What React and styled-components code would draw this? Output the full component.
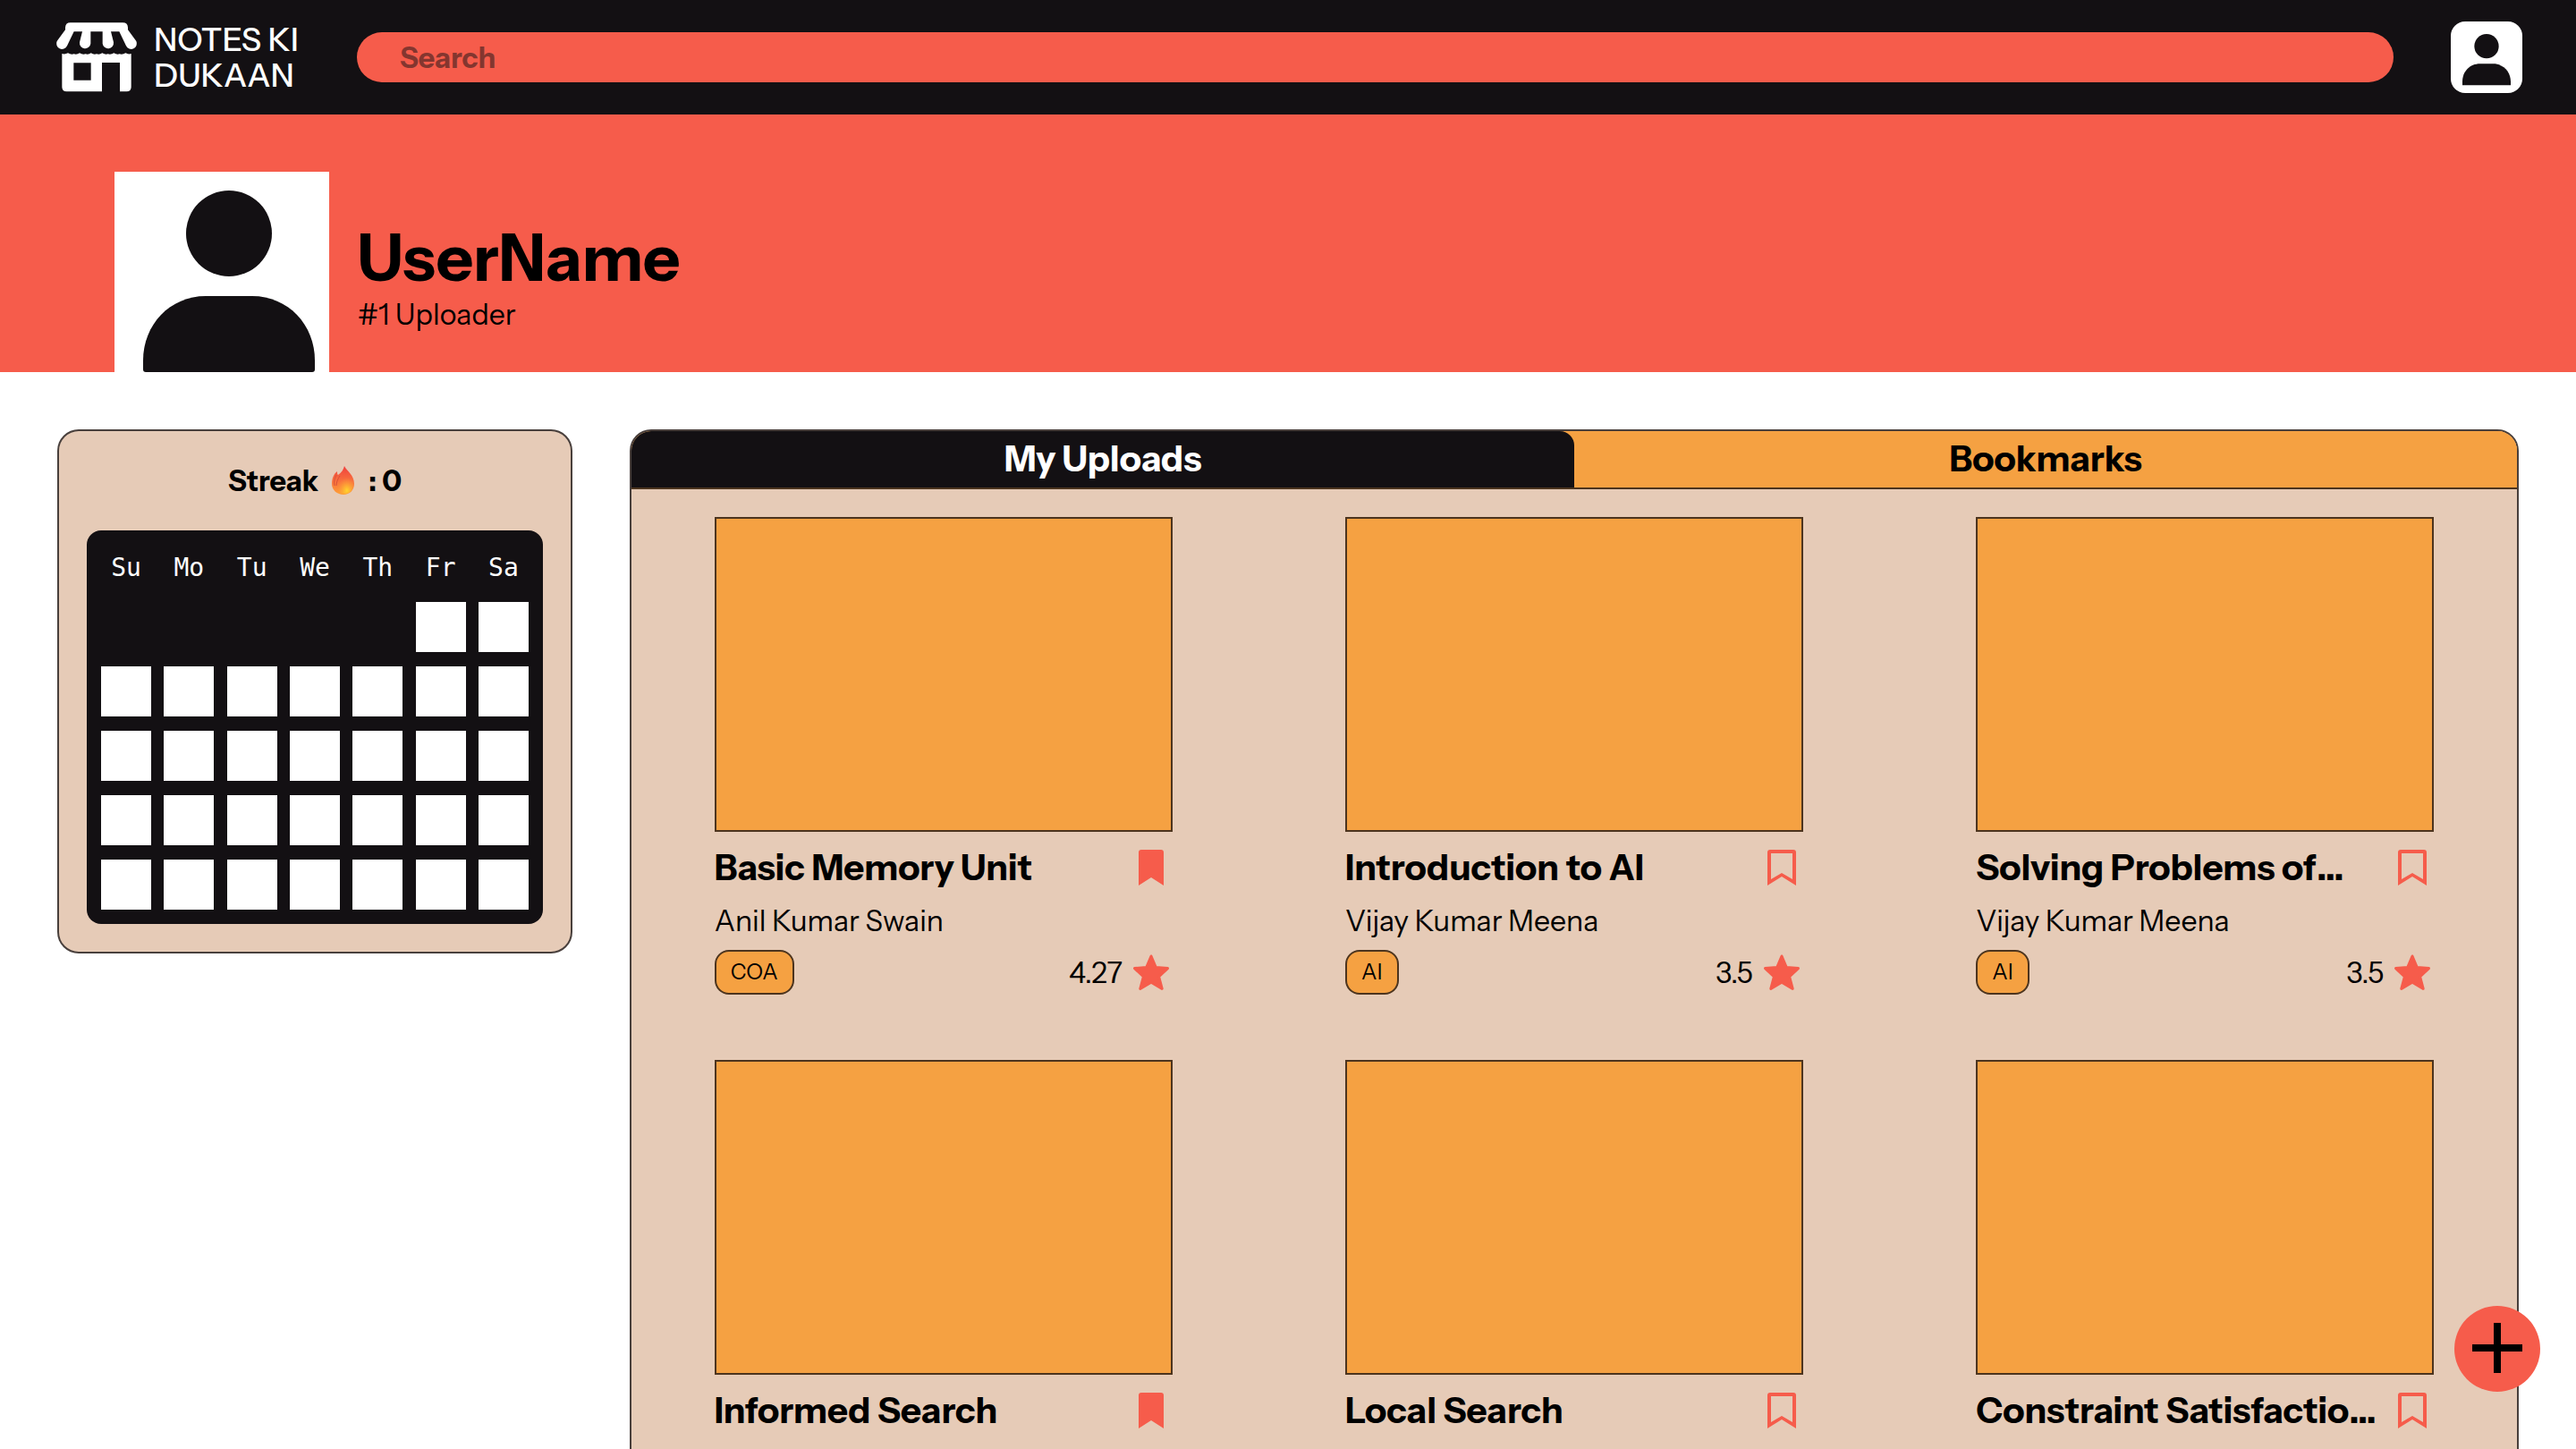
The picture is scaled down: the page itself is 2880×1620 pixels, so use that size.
import React, { useState } from "react";
import styled, { createGlobalStyle } from "styled-components";

const ink = "#131013";
const coral = "#f65c4b";
const amber = "#f5a142";
const sand = "#e6cbb7";
const line = "rgba(19, 16, 19, 0.75)";

const GlobalStyle = createGlobalStyle`
  *, *::before, *::after { box-sizing: border-box; }
  body {
    margin: 0;
    background: #fff;
    color: #000;
    font-family: "Instrument Sans", "Liberation Sans", Arial, sans-serif;
  }
  button, input { font: inherit; color: inherit; }
  button { border: 0; padding: 0; background: none; cursor: pointer; }
  h1, h2, h3, p { margin: 0; font-size: inherit; font-weight: inherit; }
`;

const Page = styled.div`
  height: 100vh;
  overflow-y: auto;
  scrollbar-width: none;
`;

const Header = styled.header`
  display: flex;
  align-items: center;
  gap: 64px;
  height: 128px;
  padding: 0 60px;
  background: ${ink};
`;

const Logo = styled.a`
  display: flex;
  align-items: center;
  gap: 16px;
  flex: 0 0 275px;
  color: #fff;
  font-size: 36px;
  font-weight: 500;
  line-height: 40px;
  white-space: nowrap;
  text-decoration: none;
`;

const LogoLine = styled.span`
  display: block;
`;

const SearchForm = styled.form`
  flex: 1;
  display: flex;
`;

const SearchInput = styled.input`
  width: 100%;
  height: 56px;
  padding: 0 48px;
  border: 0;
  border-radius: 28px;
  outline: 0;
  background: ${coral};
  font-size: 32px;
  font-weight: 700;
  &::placeholder {
    color: rgba(19, 16, 19, 0.5);
    opacity: 1;
  }
`;

const ProfileButton = styled.button`
  flex: none;
  width: 80px;
  height: 80px;
  border-radius: 16px;
  background: #fff;
  overflow: hidden;
`;

const Banner = styled.section`
  display: flex;
  align-items: flex-end;
  gap: 32px;
  height: 288px;
  padding: 0 128px;
  background: ${coral};
`;

const Avatar = styled.div`
  width: 240px;
  height: 224px;
  background: #fff;
`;

const Identity = styled.div`
  padding-bottom: 44px;
`;

const UserName = styled.h1`
  && {
    font-size: 72px;
    line-height: 88px;
    font-weight: 700;
  }
`;

const Rank = styled.p`
  && {
    font-size: 32px;
    line-height: 40px;
  }
`;

const Main = styled.main`
  display: flex;
  align-items: flex-start;
  gap: 64px;
  padding: 64px;
`;

const StreakCard = styled.section`
  flex: 0 0 576px;
  padding: 31px;
  border: 2px solid ${line};
  border-radius: 24px;
  background: ${sand};
`;

const StreakTitle = styled.h2`
  && {
    display: flex;
    justify-content: center;
    align-items: center;
    gap: 15px;
    height: 48px;
    margin-bottom: 32px;
    font-size: 32px;
    font-weight: 700;
  }
`;

const Calendar = styled.div`
  display: flex;
  flex-direction: column;
  gap: 16px;
  padding: 16px;
  border-radius: 16px;
  background: ${ink};
`;

const Week = styled.div`
  display: flex;
  justify-content: space-between;
`;

const DayName = styled.span`
  width: 56px;
  height: 48px;
  color: #fff;
  font-family: Consolas, "DejaVu Sans Mono", monospace;
  font-size: 28px;
  line-height: 52px;
  text-align: center;
`;

const Day = styled.span`
  width: 56px;
  height: 56px;
  background: ${(p) => (p.$blank ? "transparent" : "#fff")};
`;

const Panel = styled.section`
  flex: 1;
  min-width: 0;
  border: 2px solid ${line};
  border-radius: 24px;
  background: ${sand};
  overflow: hidden;
`;

const TabList = styled.div`
  display: flex;
  height: 65px;
  border-bottom: 2px solid ${line};
  background: ${amber};
`;

const Tab = styled.button`
  flex: 1;
  border-radius: 0 16px 0 0;
  background: ${(p) => (p.$active ? ink : amber)};
  color: ${(p) => (p.$active ? "#fff" : "#000")};
  font-size: 40px;
  line-height: 48px;
  padding-bottom: 2px;
  font-weight: 700;
`;

const NotesGrid = styled.div`
  display: grid;
  grid-template-columns: repeat(3, 1fr);
  justify-items: center;
  gap: 73px 8px;
  padding: 31px 0;
`;

const Card = styled.article`
  width: 512px;
`;

const Thumb = styled.div`
  height: 352px;
  margin-bottom: 16px;
  border: 2px solid ${line};
  background: ${amber};
`;

const CardRow = styled.div`
  display: flex;
  justify-content: space-between;
  align-items: center;
`;

const CardTitle = styled.h3`
  && {
    font-size: 40px;
    line-height: 48px;
    font-weight: 700;
    white-space: nowrap;
  }
`;

const Author = styled.p`
  && {
    margin: 16px 0 12px;
    font-size: 32px;
    line-height: 40px;
  }
`;

const Tag = styled.span`
  height: 50px;
  padding: 0 16px;
  border: 2px solid ${line};
  border-radius: 16px;
  background: ${amber};
  font-size: 24px;
  line-height: 46px;
`;

const Rating = styled.span`
  display: flex;
  align-items: center;
  gap: 8px;
  font-size: 32px;
`;

const IconButton = styled.button`
  display: flex;
  width: 48px;
  height: 48px;
`;

const AddButton = styled.button`
  position: fixed;
  right: 40px;
  bottom: 64px;
  width: 96px;
  height: 96px;
  border-radius: 50%;
  background: ${coral};
`;

const Icon = styled.svg`
  display: block;
  flex: none;
  width: ${(p) => p.$w}px;
  height: ${(p) => p.$h || p.$w}px;
`;

const ShopIcon = () => (
  <Icon $w={96} viewBox="30 18 288 288" fill="#fff" aria-hidden="true">
    <path d="M86 46H262Q278 46 279 62V70L307 108A18 18 0 1 1 273 124L250 76H222L231 112A18 18 0 0 1 194 116V76H154V116A18 18 0 0 1 117 112L126 76H98L75 124A18 18 0 1 1 41 108L69 70V62Q70 46 86 46Z" />
    <path
      fillRule="evenodd"
      d="M58 150Q68 153 78 148Q88 154 98 151Q108 154 117 148Q127 154 137 151Q147 154 155 148Q165 154 174 151Q184 154 193 148Q203 154 212 151Q222 154 232 148Q242 154 251 151Q261 154 271 148Q281 153 290 150V262Q290 277 275 277H252V180H192V277H73Q58 277 58 262ZM97 181V239H155V181Z"
    />
  </Icon>
);

const PersonIcon = () => (
  <Icon $w={80} viewBox="0 0 240 240" fill={ink} aria-hidden="true">
    <circle cx="120" cy="83" r="41" />
    <path d="M39 214V202C39 168 64 142 98 142H142C176 142 201 168 201 202V214Z" />
  </Icon>
);

const AvatarArt = () => (
  <Icon $w={240} $h={224} viewBox="0 0 240 224" fill={ink} aria-hidden="true">
    <circle cx="128" cy="69" r="48" />
    <path d="M32 221V211C32 171 62 139 102 139H154C194 139 224 171 224 211V221Q224 224 221 224H35Q32 224 32 221Z" />
  </Icon>
);

const FlameIcon = () => (
  <Icon $w={26} $h={32} viewBox="0 0 26 32" role="img" aria-label="fire">
    <defs>
      <linearGradient id="flame" x1="0" y1="0" x2="0" y2="1">
        <stop offset="0" stopColor="#f0403f" />
        <stop offset="0.6" stopColor="#f9783c" />
        <stop offset="1" stopColor="#ffa036" />
      </linearGradient>
      <radialGradient id="glow" cx="0.6" cy="0.85" r="0.6">
        <stop offset="0" stopColor="#ffd52e" />
        <stop offset="1" stopColor="#ffa037" stopOpacity="0" />
      </radialGradient>
    </defs>
    <path
      d="M14 0C17 6 25 10 25 20C25 27 20 32 13 32C6 32 0 27 0 20C0 14 2 9 6 6C6 8 6 9 7 10C11 7 13 4 14 0Z"
      fill="url(#flame)"
    />
    <path
      d="M16 7C17 12 24 14 24 21C24 27 20 31 14 31C9 31 6 28 6 23C6 17 14 14 16 7Z"
      fill="url(#glow)"
    />
    <path d="M5 10C3 14 2 18 3 22M9 11C7 14 5 18 5 22" fill="none" stroke="#d8503a" strokeWidth="1" />
  </Icon>
);

const BookmarkIcon = ({ filled }) => (
  <Icon $w={48} viewBox="0 0 48 48" aria-hidden="true">
    {filled ? (
      <path fill={coral} d="M13 4H35Q38 4 38 7V44L24 35L10 44V7Q10 4 13 4Z" />
    ) : (
      <path
        fill={coral}
        fillRule="evenodd"
        d="M11 4H37Q40 4 40 7V44L24 34L8 44V7Q8 4 11 4ZM12 8V37L24 30L36 37V8Z"
      />
    )}
  </Icon>
);

const StarIcon = () => (
  <Icon $w={48} viewBox="0 0 48 48" aria-hidden="true">
    <path
      fill={coral}
      stroke={coral}
      strokeWidth="3"
      strokeLinejoin="round"
      d="M24 6L29.3 18.6L42.5 19.6L32.6 28.8L36.2 42.4L24 35.2L11.8 42.4L15.4 28.8L5.5 19.6L18.7 18.6Z"
    />
  </Icon>
);

const PlusIcon = () => (
  <Icon $w={96} viewBox="0 0 96 96" aria-hidden="true">
    <path d="M44 19H52V43H76V51H52V75H44V51H20V43H44Z" />
  </Icon>
);

const dayNames = ["Su", "Mo", "Tu", "We", "Th", "Fr", "Sa"];
const leadingBlanks = 5;

const notes = [
  { title: "Basic Memory Unit", author: "Anil Kumar Swain", tag: "COA", rating: "4.27", saved: true },
  { title: "Introduction to AI", author: "Vijay Kumar Meena", tag: "AI", rating: "3.5", saved: false },
  { title: "Solving Problems of…", author: "Vijay Kumar Meena", tag: "AI", rating: "3.5", saved: false },
  { title: "Informed Search", author: "Vijay Kumar Meena", tag: "AI", rating: "3.5", saved: true },
  { title: "Local Search", author: "Vijay Kumar Meena", tag: "AI", rating: "3.5", saved: false },
  { title: "Constraint Satisfactio…", author: "Vijay Kumar Meena", tag: "AI", rating: "3.5", saved: false },
];

function NoteCard({ note }) {
  const [saved, setSaved] = useState(note.saved);
  return (
    <Card>
      <Thumb />
      <CardRow>
        <CardTitle>{note.title}</CardTitle>
        <IconButton
          type="button"
          aria-label="Bookmark"
          aria-pressed={saved}
          onClick={() => setSaved(!saved)}
        >
          <BookmarkIcon filled={saved} />
        </IconButton>
      </CardRow>
      <Author>{note.author}</Author>
      <CardRow>
        <Tag>{note.tag}</Tag>
        <Rating>
          {note.rating}
          <StarIcon />
        </Rating>
      </CardRow>
    </Card>
  );
}

export default function App() {
  const [tab, setTab] = useState("My Uploads");
  return (
    <Page>
      <GlobalStyle />
      <Header>
        <Logo href="#">
          <ShopIcon />
          <span>
            <LogoLine>NOTES KI</LogoLine>
            <LogoLine>DUKAAN</LogoLine>
          </span>
        </Logo>
        <SearchForm role="search">
          <SearchInput type="text" placeholder="Search" aria-label="Search" />
        </SearchForm>
        <ProfileButton type="button" aria-label="Profile">
          <PersonIcon />
        </ProfileButton>
      </Header>
      <Banner>
        <Avatar>
          <AvatarArt />
        </Avatar>
        <Identity>
          <UserName>UserName</UserName>
          <Rank>#1 Uploader</Rank>
        </Identity>
      </Banner>
      <Main>
        <StreakCard>
          <StreakTitle>
            <span>Streak</span>
            <FlameIcon />
            <span>: 0</span>
          </StreakTitle>
          <Calendar>
            <Week>
              {dayNames.map((name) => (
                <DayName key={name}>{name}</DayName>
              ))}
            </Week>
            {[0, 1, 2, 3, 4].map((week) => (
              <Week key={week}>
                {dayNames.map((name, i) => (
                  <Day key={name} $blank={week * 7 + i < leadingBlanks} />
                ))}
              </Week>
            ))}
          </Calendar>
        </StreakCard>
        <Panel>
          <TabList role="tablist">
            {["My Uploads", "Bookmarks"].map((name) => (
              <Tab
                key={name}
                type="button"
                role="tab"
                aria-selected={tab === name}
                $active={tab === name}
                onClick={() => setTab(name)}
              >
                {name}
              </Tab>
            ))}
          </TabList>
          <NotesGrid>
            {notes.map((note) => (
              <NoteCard key={note.title} note={note} />
            ))}
          </NotesGrid>
        </Panel>
      </Main>
      <AddButton type="button" aria-label="Add notes">
        <PlusIcon />
      </AddButton>
    </Page>
  );
}
